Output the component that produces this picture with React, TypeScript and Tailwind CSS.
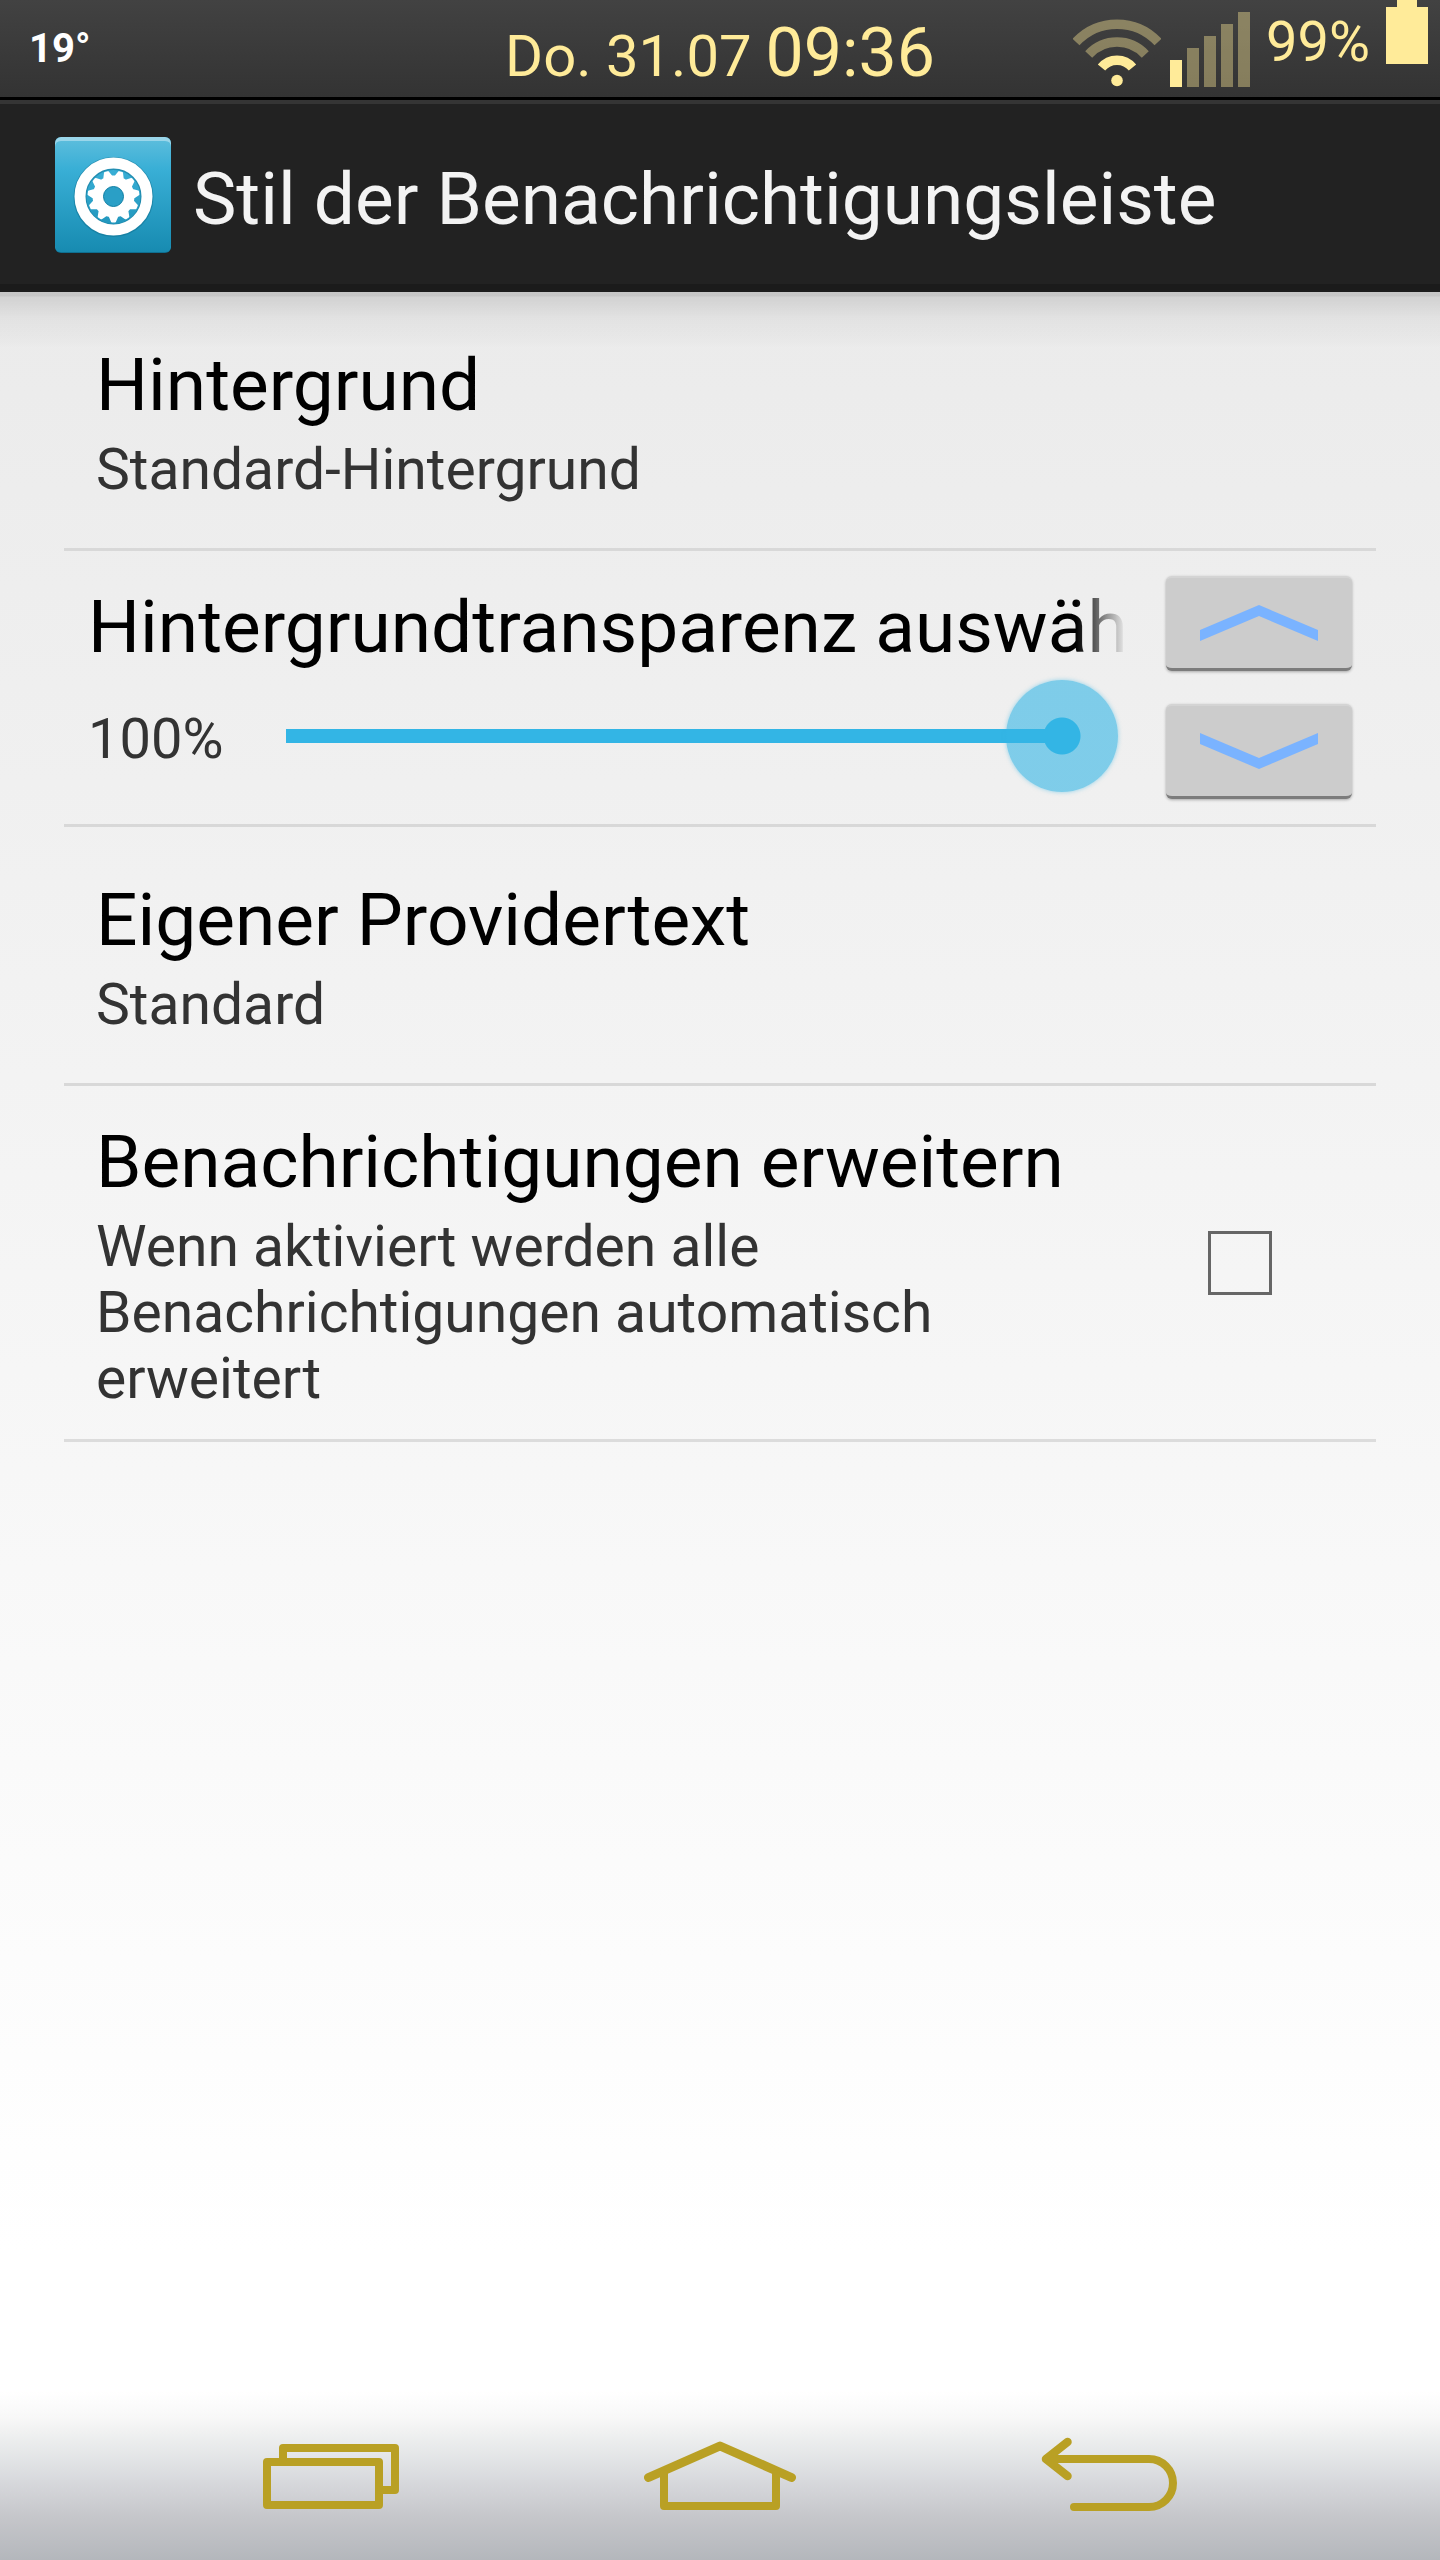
import { useState } from 'react';
import type { ReactNode } from 'react';

const GEAR_TEETH = 11;

// outline of the cog, first tooth pointing down
const gearPath = () => {
    const points: string[] = [];
    const step = (Math.PI * 2) / GEAR_TEETH;
    const at = (angle: number, radius: number) =>
        `${(58.5 + Math.sin(angle) * radius).toFixed(2)} ${(59.5 + Math.cos(angle) * radius).toFixed(2)}`;

    for (let i = 0; i < GEAR_TEETH; i++) {
        const a = i * step;
        points.push(at(a - step * 0.34, 20), at(a - step * 0.11, 25), at(a + step * 0.11, 25), at(a + step * 0.34, 20));
    }
    return `M${points.join('L')}Z`;
};

const SettingsIcon = () => (
    <svg className="h-[116px] w-[116px] shrink-0" viewBox="0 0 116 116" aria-hidden="true">
        <defs>
            <linearGradient id="tile" x1="0" y1="0" x2="0" y2="1">
                <stop offset="0" stopColor="#5abcdc" />
                <stop offset="0.25" stopColor="#39afd6" />
                <stop offset="1" stopColor="#178bb1" />
            </linearGradient>
        </defs>
        <rect width="116" height="116" rx="6" fill="#0f6f90" />
        <rect width="116" height="114" rx="6" fill="#9ad6ea" />
        <path d="M0 10Q0 4 6 4H110Q116 4 116 10V109Q116 115 110 115H6Q0 115 0 109Z" fill="url(#tile)" />
        <circle cx="58.5" cy="60" r="33.5" fill="none" stroke="#0f6f90" strokeOpacity="0.5" strokeWidth="13" />
        <circle cx="58.5" cy="59.5" r="33.5" fill="none" stroke="#fff" strokeWidth="11" />
        <path d={gearPath()} fill="#fff" stroke="#fff" strokeWidth="2" strokeLinejoin="round" />
        <circle cx="58.5" cy="59.5" r="10" fill="#2a9fc6" stroke="#0f7ea3" strokeWidth="1" />
    </svg>
);

const WifiIcon = () => (
    <svg className="h-[68px] w-[88px]" viewBox="0 0 88 68" fill="none" stroke="#ffeb99" strokeWidth="9.5" aria-hidden="true">
        <path d="M3 23A56 56 0 0 1 85 23" strokeOpacity="0.4" />
        <path d="M15.700 35.500A38.500 38.500 0 0 1 72.300 35.500" strokeOpacity="0.4" />
        <path d="M28.500 48.500A20 20 0 0 1 59.500 48.500" />
        <circle cx="44" cy="61.500" r="5.800" fill="#ffeb99" stroke="none" />
    </svg>
);

const SignalIcon = () => (
    <svg className="h-[75px] w-20" viewBox="0 0 80 75" fill="#ffeb99" aria-hidden="true">
        <rect x="0" y="48" width="12" height="27" />
        <g fillOpacity="0.4">
            <rect x="17" y="36" width="12" height="39" />
            <rect x="34" y="24" width="12" height="51" />
            <rect x="51" y="12" width="12" height="63" />
            <rect x="68" y="0" width="12" height="75" />
        </g>
    </svg>
);

const BatteryIcon = () => (
    <svg className="h-16 w-[42px]" viewBox="0 0 42 64" fill="#ffeb99" aria-hidden="true">
        <path d="M11 0H31V7H42V64H0V7H11Z" />
    </svg>
);

const StatusBar = () => (
    <header className="grid h-[100px] grid-cols-[1fr_auto_1fr] items-start border-b-[3px] border-black bg-linear-to-b from-[#424242] to-[#333333]">
        <div className="pt-6 pl-[29px] text-[40px] leading-[49px] font-bold text-white">19°</div>
        <div className="flex items-baseline gap-[14px] pt-[13px] leading-[80px] whitespace-nowrap text-[#ffeb99]">
            <span className="text-[58px]">Do. 31.07</span>
            <span className="text-[68px]">09:36</span>
        </div>
        <div className="flex items-start justify-end pr-3">
            <div className="flex items-end gap-[9px] pt-3">
                <WifiIcon />
                <SignalIcon />
            </div>
            <span className="px-4 pt-[9px] text-[56px] leading-[66px] text-[#ffeb99]">99%</span>
            <BatteryIcon />
        </div>
    </header>
);

const TitleBar = () => (
    <div className="flex h-48 items-end gap-[22px] border-t-4 border-b-8 border-t-[#353535] border-b-[#1b1b1b] bg-[#222222] pb-[31px] pl-[55px]">
        <SettingsIcon />
        <h1 className="text-[73px] leading-[108px] whitespace-nowrap text-[#f3f3f3]">Stil der Benachrichtigungsleiste</h1>
    </div>
);

interface EntryTextProps {
    title: string;
    summary: string;
}

const EntryText = ({ title, summary }: EntryTextProps) => (
    <span className="flex min-w-0 flex-1 flex-col gap-2.5 pt-[7px]">
        <span className="text-[73px] leading-[84px] text-black">{title}</span>
        <span className="text-[57px] leading-[66px] text-[#333333]">{summary}</span>
    </span>
);

const Entry = (props: EntryTextProps) => (
    <li className="border-b-[3px] border-[#d8d8d8]">
        <button type="button" className="flex w-full px-8 pt-11 pb-[45px] text-left">
            <EntryText {...props} />
        </button>
    </li>
);

interface StepButtonProps {
    label: string;
    path: string;
    onClick: () => void;
}

const StepButton = ({ label, path, onClick }: StepButtonProps) => (
    <button
        type="button"
        aria-label={label}
        onClick={onClick}
        className="flex h-[95px] w-[186px] items-center justify-center rounded-md border-t-2 border-b-3 border-t-[#d4d4d4] border-b-[#7c7c7c] bg-[#cccccc] shadow-[0_1px_3px_rgba(0,0,0,0.3)]"
    >
        <svg className="h-9 w-[118px]" viewBox="0 0 118 36" fill="#7ab3ff" aria-hidden="true">
            <path d={path} />
        </svg>
    </button>
);

const TransparencyEntry = () => {
    const [value, setValue] = useState(100);

    return (
        <li className="flex gap-10 border-b-[3px] border-[#d8d8d8] px-6 py-[25px]">
            <div className="min-w-0 flex-1 pt-[9px]">
                <label
                    htmlFor="transparency"
                    className="block overflow-hidden mask-[linear-gradient(to_right,black_calc(100%-50px),transparent)] text-[73px] leading-[84px] whitespace-nowrap text-black"
                >
                    Hintergrundtransparenz auswäh
                </label>
                <div className="mt-[11px] flex items-end">
                    <output htmlFor="transparency" className="w-[198px] shrink-0 text-[56px] leading-[106px] text-[#333333]">
                        {value}%
                    </output>
                    <input
                        id="transparency"
                        type="range"
                        min={0}
                        max={100}
                        value={value}
                        onChange={(e) => setValue(Number(e.target.value))}
                        style={{ backgroundSize: `calc((100% - 112px) * ${value / 100} + 56px) 14px` }}
                        className="mr-2 h-28 min-w-0 flex-1 appearance-none bg-[linear-gradient(#33b5e5,#33b5e5)] bg-left bg-no-repeat [&::-webkit-slider-thumb]:h-28 [&::-webkit-slider-thumb]:w-28 [&::-webkit-slider-thumb]:appearance-none [&::-webkit-slider-thumb]:rounded-full [&::-webkit-slider-thumb]:bg-[radial-gradient(circle,#33b5e5_18px,rgba(51,181,229,0.6)_19px)] [&::-webkit-slider-thumb]:shadow-[0_0_4px_rgba(51,181,229,0.5)]"
                    />
                </div>
            </div>
            <div className="flex flex-col gap-[33px]">
                <StepButton label="Erhöhen" path="M0 25L59 0L118 25V36L59 11L0 36Z" onClick={() => setValue(Math.min(100, value + 1))} />
                <StepButton label="Verringern" path="M0 0L59 25L118 0V11L59 36L0 11Z" onClick={() => setValue(Math.max(0, value - 1))} />
            </div>
        </li>
    );
};

const ExpandEntry = () => {
    const [checked, setChecked] = useState(false);

    return (
        <li className="border-b-[3px] border-[#dcdcdc]">
            <label className="flex items-center gap-16 py-[27px] pr-[104px] pl-8">
                <EntryText title="Benachrichtigungen erweitern" summary="Wenn aktiviert werden alle Benachrichtigungen automatisch erweitert" />
                <input
                    type="checkbox"
                    checked={checked}
                    onChange={(e) => setChecked(e.target.checked)}
                    className="h-16 w-16 shrink-0 appearance-none border-3 border-[#666666] checked:bg-[#33b5e5]"
                />
            </label>
        </li>
    );
};

const NavButton = ({ label, children }: { label: string; children: ReactNode }) => (
    <button type="button" aria-label={label} className="flex items-center justify-center">
        <svg
            className="h-20 w-40"
            viewBox="0 0 160 80"
            fill="none"
            stroke="#b9a024"
            strokeWidth="8"
            strokeLinecap="round"
            strokeLinejoin="round"
            aria-hidden="true"
        >
            {children}
        </svg>
    </button>
);

const NavBar = () => (
    <nav className="mt-auto grid h-[168px] grid-cols-3 bg-[linear-gradient(#ffffff,#f8f8f8_15%,#f0f1f1_24%,#e2e4e6_40%,#d5d6da_56%,#c5c6ca_75%,#b4b7bc)] px-[137px]">
        <NavButton label="Letzte Apps">
            <rect x="16" y="26" width="112" height="43" />
            <path d="M32 24V12H144V54H130" />
        </NavButton>
        <NavButton label="Startseite">
            <path d="M8.500 41.500L80 10L151.500 41.500" strokeWidth="9" />
            <path d="M24 38V70H136V38" />
        </NavButton>
        <NavButton label="Zurück">
            <path d="M38.500 6L17 23L38.500 40" strokeWidth="8.500" />
            <path d="M18 23H120A24 24 0 0 1 120 71H45" />
        </NavButton>
    </nav>
);

const App = () => (
    <div className="flex min-h-screen flex-col bg-[linear-gradient(#e8e8e8,#ffffff_88%)] font-[Roboto,sans-serif]">
        <StatusBar />
        <TitleBar />
        <main className="bg-[linear-gradient(rgba(0,0,0,0.16)_4px,rgba(0,0,0,0.11)_5px,rgba(0,0,0,0.04)_26px,rgba(0,0,0,0.01)_50px,transparent_56px)] px-16">
            <ul>
                <Entry title="Hintergrund" summary="Standard-Hintergrund" />
                <TransparencyEntry />
                <Entry title="Eigener Providertext" summary="Standard" />
                <ExpandEntry />
            </ul>
        </main>
        <NavBar />
    </div>
);

export default App;
